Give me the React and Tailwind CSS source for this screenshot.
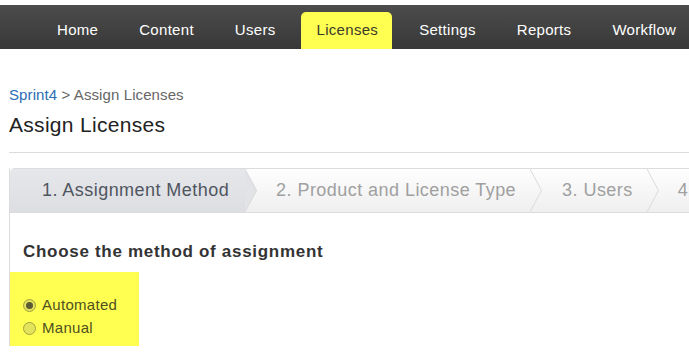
const navItems = ['Home', 'Content', 'Users', 'Licenses', 'Settings', 'Reports', 'Workflow'];

const Radio = ({ checked, label }) => (
  <label className="flex items-center h-[23px] gap-[6px] text-[15px] tracking-[0.3px] text-[#4f4f1e]">
    <span className="w-[13px] h-[13px] rounded-full border border-[#a3a33c] bg-[#e3e35c] flex items-center justify-center">
      {checked && <span className="w-[7px] h-[7px] rounded-full bg-[#5c5c34]" />}
    </span>
    {label}
  </label>
);

const Chevron = ({ active }) => (
  <svg width="12" height="43" viewBox="0 0 12 43" className="shrink-0 block">
    {active ? (
      <polygon points="0,0 12,21.5 0,43" fill="#e1e3e6" />
    ) : null}
    <polyline points="0,0 11.5,21.5 0,43" fill="none" stroke="#dadada" strokeWidth="1" />
  </svg>
);

const App = () => {
  return (
    <div className="w-[689px] h-[353px] overflow-hidden bg-white" style={{ fontFamily: '"Liberation Sans", Arial, sans-serif' }}>
      <div className="h-[5px]" />
      <nav className="h-[44px] bg-gradient-to-b from-[#4c4c4c] to-[#383838] flex items-end pl-[57px] gap-[41px] whitespace-nowrap tracking-[0.3px]">
        {navItems.map((item) =>
          item === 'Licenses' ? (
            <span
              key={item}
              className="h-[37px] -ml-[16px] -mr-[14px] pl-[16px] pr-[14px] flex items-center bg-[#ffff52] rounded-t-[5px] text-[15px] text-[#3a3a2a]"
            >
              {item}
            </span>
          ) : (
            <span key={item} className="h-[37px] flex items-center text-[15px] text-white">
              {item}
            </span>
          )
        )}
      </nav>

      <div className="pl-[9px]">
        <p className="mt-[37px] text-[15px] leading-[18px] tracking-[0.1px] text-[#666]">
          <span className="text-[#2c6db5]">Sprint4</span> &gt; Assign Licenses
        </p>
        <h1 className="mt-[8px] text-[21px] leading-[26px] tracking-[0.3px] text-[#222]">Assign Licenses</h1>
        <div className="mt-[14px] border-t border-[#dcdcdc]" />

        <div className="mt-[15px] border-l border-[#dcdcdc]">
          <div className="flex items-stretch border-t border-b border-[#dcdcdc] rounded-tl-[5px] overflow-hidden whitespace-nowrap bg-gradient-to-b from-[#fefefe] to-[#efefef] text-[18px] tracking-[0.45px]">
            <div className="h-[43px] flex items-center pl-[32px] pr-[16px] bg-gradient-to-b from-[#e6e7ea] to-[#dcdee2] text-[#4f5560]">
              1. Assignment Method
            </div>
            <Chevron active />
            <div className="h-[43px] flex items-center pl-[19px] pr-[14px] text-[#a0a0a0]">
              2. Product and License Type
            </div>
            <Chevron />
            <div className="h-[43px] flex items-center pl-[20px] pr-[14px] text-[#a0a0a0]">
              3. Users
            </div>
            <Chevron />
            <div className="h-[43px] flex items-center pl-[19px] pr-[14px] text-[#a0a0a0]">
              4. Confirm
            </div>
          </div>

          <h2 className="mt-[27px] ml-[13px] text-[17px] leading-[24px] font-bold tracking-[0.7px] text-[#333]">
            Choose the method of assignment
          </h2>

          <div className="mt-[8px] w-[129px] h-[74px] bg-[#ffff52] pt-[22px] pl-[13px]">
            <Radio checked label="Automated" />
            <Radio label="Manual" />
          </div>
        </div>
      </div>
    </div>
  );
};

export default App;
